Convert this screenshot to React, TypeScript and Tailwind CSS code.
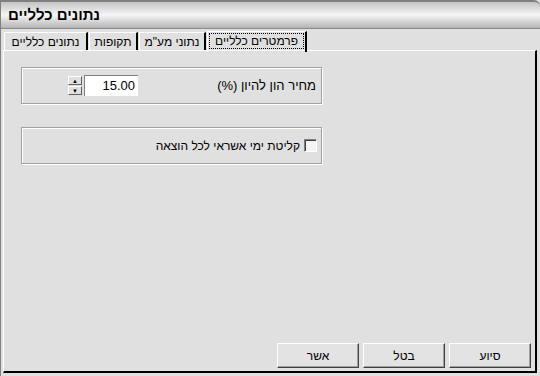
import React from "react";

const font = { fontFamily: '"Liberation Sans", Arial, sans-serif' };

function Tab({ label, width }: { label: string; width: string }) {
  return (
    <div className={`flex h-[18px] items-center justify-center border-l border-t border-white border-r-2 border-r-black text-[12px] leading-[14px] text-black ${width}`} dir="rtl">
      {label}
    </div>
  );
}

function Button({ label }: { label: string }) {
  return (
    <div className="flex h-[25px] w-[82px] items-center justify-center border-l border-t border-white border-r border-b border-r-[#404040] border-b-[#404040] bg-[#e3e3e3] text-[12px] text-black shadow-[inset_-1px_-1px_0_#a0a0a0]" dir="rtl">
      {label}
    </div>
  );
}

export default function App() {
  return (
    <div
      className="flex h-[376px] w-[540px] flex-col overflow-hidden bg-[#e0e0e0] border-l border-l-[#808080]"
      style={font}
    >
      {/* Title bar */}
      <div className="flex h-[29px] shrink-0 items-center border-t-2 border-t-[#808080] border-b border-b-[#8a8a8a] bg-gradient-to-b from-[#c4c4c4] via-[#f6f6f6] to-[#b4b4b4] pl-[7px] rounded-tr-[6px]">
        <span className="text-[15px] font-bold text-black" dir="rtl">
          נתונים כלליים
        </span>
      </div>

      {/* Tabs */}
      <div className="flex h-[21px] shrink-0 items-end gap-[1px] pl-[3px] pt-[2px]">
        <Tab label="נתונים כלליים" width="w-[84px]" />
        <Tab label="תקופות" width="w-[49px]" />
        <Tab label='נתוני מע"מ' width="w-[67px]" />
        <div className="relative z-10 -mb-[2px] flex h-[21px] w-[100px] items-center border-l border-t border-white border-r-2 border-r-black px-[1px] pb-[2px]">
          <div className="flex flex-1 justify-center border border-dotted border-black text-[12px] leading-[14px] text-black" dir="rtl">
            פרמטרים כלליים
          </div>
        </div>
      </div>

      {/* Panel */}
      <div className="ml-[2px] mr-[3px] mb-[3px] flex flex-1 flex-col border-l border-t border-white border-r-2 border-b-2 border-r-black border-b-black">
        <div className="flex flex-1 flex-col px-[17px] pt-[16px]">
          {/* Group 1 */}
          <div className="flex h-[37px] w-[301px] items-center justify-between border border-[#a0a0a0] shadow-[inset_1px_1px_0_#fff,1px_1px_0_#fff] pl-[46px] pr-[5px]">
            <div className="flex items-center">
              <div className="flex h-[19px] w-[14px] flex-col">
                <div className="flex h-[9px] items-center justify-center border-l border-t border-white border-r border-b border-r-[#606060] border-b-[#606060] text-[6px] leading-none text-black">
                  ▲
                </div>
                <div className="mt-[1px] flex h-[9px] items-center justify-center border-l border-t border-white border-r border-b border-r-[#606060] border-b-[#606060] text-[6px] leading-none text-black">
                  ▼
                </div>
              </div>
              <div className="ml-[2px] flex h-[21px] w-[54px] items-center justify-end border-l border-t border-[#808080] bg-white pr-[3px] text-[13px] text-black">
                15.00
              </div>
            </div>
            <span className="text-[13px] text-black" dir="rtl">
              מחיר הון להיון (%)
            </span>
          </div>

          {/* Group 2 */}
          <div className="mt-[23px] flex h-[37px] w-[301px] items-center justify-end gap-[4px] border border-[#a0a0a0] shadow-[inset_1px_1px_0_#fff,1px_1px_0_#fff] pr-[4px]">
            <span className="text-[12px] text-black" dir="rtl">
              קליטת ימי אשראי לכל הוצאה
            </span>
            <div className="h-[13px] w-[13px] border-l border-t border-[#808080] border-r border-b border-r-white border-b-white bg-[#f4f4f4] shadow-[inset_1px_1px_0_#404040]" />
          </div>

          <div className="flex-1" />

          {/* Buttons */}
          <div className="mb-[3px] -mr-[13px] flex justify-end gap-[4px]">
            <Button label="אשר" />
            <Button label="בטל" />
            <Button label="סיוע" />
          </div>
        </div>
      </div>
    </div>
  );
}
